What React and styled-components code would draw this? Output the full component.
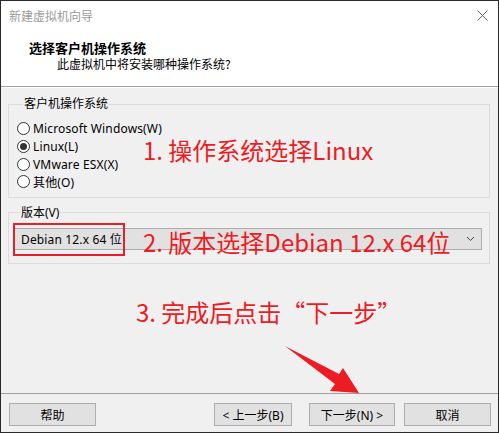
import React from "react";
import styled, { createGlobalStyle } from "styled-components";

const GlobalStyle = createGlobalStyle`
  html, body {
    margin: 0;
    padding: 0;
    background: #ffffff;
  }
  body {
    font-family: "Noto Sans", "Noto Sans CJK SC", sans-serif;
    font-size: 12px;
  }
`;

const Window = styled.div`
  box-sizing: border-box;
  width: 499px;
  height: 433px;
  border: 1px solid #2b2b2b;
  display: flex;
  flex-direction: column;
  position: relative;
  overflow: hidden;
  background: #f0f0f0;
`;

const TitleBar = styled.div`
  height: 29px;
  display: flex;
  align-items: center;
  justify-content: space-between;
  padding: 0 10px 0 8px;
  background: #ffffff;
`;

const TitleText = styled.span`
  font-family: "Noto Sans CJK SC", sans-serif;
  font-size: 12px;
  color: #9a9a9a;
`;

const Header = styled.div`
  height: 57px;
  background: #ffffff;
  border-bottom: 1px solid #a0a0a0;
  box-sizing: border-box;
  padding: 9px 0 0 28px;
  display: flex;
  flex-direction: column;
`;

const Heading = styled.div`
  font-family: "Noto Sans CJK SC", sans-serif;
  font-weight: 700;
  font-size: 13px;
  line-height: 17px;
  color: #000;
`;

const SubHeading = styled.div`
  font-family: "Noto Sans CJK SC", sans-serif;
  font-size: 12px;
  line-height: 16px;
  color: #000;
  padding-left: 28px;
`;

const Body = styled.div`
  flex: 1;
  padding: 8px 8px 0 7px;
  display: flex;
  flex-direction: column;
  border-top: 1px solid #fbfbfb;
`;

const Group = styled.fieldset`
  margin: ${(p) => (p.$first ? "0" : "7px 0 0")};
  padding: ${(p) => p.$pad};
  border: 1px solid #dcdcdc;
  min-width: 0;
`;

const Legend = styled.legend`
  padding: 0 1px;
  margin-left: 6px;
  font-family: "Noto Sans", "Noto Sans CJK SC", sans-serif;
  font-size: 12px;
  line-height: 16px;
  color: #000;
`;

const OsRow = styled.div`
  display: grid;
  grid-template-columns: 126px 1fr;
`;

const RadioList = styled.div`
  display: flex;
  flex-direction: column;
`;

const RadioItem = styled.label`
  height: 17.7px;
  display: flex;
  align-items: center;
  gap: 3px;
  font-size: 12px;
  letter-spacing: 0.15px;
  color: #000;
  white-space: nowrap;
`;

const RadioCircle = styled.span`
  box-sizing: border-box;
  flex: 0 0 13px;
  width: 13px;
  height: 13px;
  border-radius: 50%;
  border: 1px solid #333;
  background: #fff;
  display: flex;
  align-items: center;
  justify-content: center;

  &::after {
    content: "";
    width: 7px;
    height: 7px;
    border-radius: 50%;
    background: ${(p) => (p.$checked ? "#333" : "transparent")};
  }
`;

const Note = styled.div`
  font-family: "Noto Sans CJK SC", sans-serif;
  font-size: 24px;
  line-height: 30px;
  color: #ec1c24;
  white-space: nowrap;
  margin: ${(p) => p.$margin || "0"};
`;

const ComboWrap = styled.div`
  position: relative;
`;

const Combo = styled.div`
  box-sizing: border-box;
  height: 22px;
  border: 1px solid #adadad;
  background: #e1e1e1;
  display: flex;
  align-items: center;
  justify-content: space-between;
  padding: 0 6px 0 6px;
  font-size: 12px;
  letter-spacing: 0.15px;
  color: #000;
`;

const Highlight = styled.div`
  position: absolute;
  left: -1px;
  top: -5px;
  width: 112px;
  height: 33px;
  box-sizing: border-box;
  border: 2px solid #e3202b;
`;

const OverNote = styled(Note)`
  position: absolute;
  left: 129px;
  top: -1px;
`;

const Footer = styled.div`
  border-top: 1px solid #a0a0a0;
  height: 39px;
  box-sizing: border-box;
  padding: 9px 7px 0 8px;
  display: flex;
  align-items: flex-start;
`;

const Button = styled.button`
  box-sizing: border-box;
  width: ${(p) => p.$w}px;
  height: 23px;
  margin-left: ${(p) => p.$ml || 0}px;
  border: 1px solid #adadad;
  background: #e1e1e1;
  font-family: "Noto Sans", "Noto Sans CJK SC", sans-serif;
  font-size: 12px;
  color: #000;
  padding: 0;
  display: flex;
  align-items: center;
  justify-content: center;
`;

const Arrow = styled.svg`
  position: absolute;
  left: 0;
  top: 0;
  pointer-events: none;
`;

const osList = [
  { label: "Microsoft Windows(W)", checked: false },
  { label: "Linux(L)", checked: true },
  { label: "VMware ESX(X)", checked: false },
  { label: "其他(O)", checked: false },
];

export default function App() {
  return (
    <>
      <GlobalStyle />
      <Window>
        <TitleBar>
          <TitleText>新建虚拟机向导</TitleText>
          <svg width="11" height="11" viewBox="0 0 11 11">
            <path d="M0.5 0.5 L10.5 10.5 M10.5 0.5 L0.5 10.5" stroke="#666" strokeWidth="1" />
          </svg>
        </TitleBar>
        <Header>
          <Heading>选择客户机操作系统</Heading>
          <SubHeading>此虚拟机中将安装哪种操作系统?</SubHeading>
        </Header>
        <Body>
          <Group $first $pad="8px 8px 6px 8px">
            <Legend>客户机操作系统</Legend>
            <OsRow>
              <RadioList>
                {osList.map((os) => (
                  <RadioItem key={os.label}>
                    <RadioCircle $checked={os.checked} />
                    {os.label}
                  </RadioItem>
                ))}
              </RadioList>
              <Note $margin="15px 0 0 0">1. 操作系统选择Linux</Note>
            </OsRow>
          </Group>
          <Group $pad="7px 7px 13px 5px">
            <Legend>版本(V)</Legend>
            <ComboWrap>
              <Combo>
                <span>Debian 12.x 64 位</span>
                <svg width="9" height="6" viewBox="0 0 9 6">
                  <path d="M1 1 L4.5 4.5 L8 1" fill="none" stroke="#444" strokeWidth="1" />
                </svg>
              </Combo>
              <Highlight />
              <OverNote>2. 版本选择Debian 12.x 64位</OverNote>
            </ComboWrap>
          </Group>
          <Note $margin="33px 0 0 128px">3. 完成后点击“下一步”</Note>
        </Body>
        <Footer>
          <Button $w={87}>帮助</Button>
          <Button $w={78} $ml={118}>&lt; 上一步(B)</Button>
          <Button $w={86} $ml={17}>下一步(N) &gt;</Button>
          <Button $w={87} $ml={9}>取消</Button>
        </Footer>
        <Arrow width="499" height="433" viewBox="0 0 499 433">
          <polygon
            points="284,345 338,373 342,367 358,392 329,390 334,383"
            fill="#ec1c24"
          />
        </Arrow>
      </Window>
    </>
  );
}
